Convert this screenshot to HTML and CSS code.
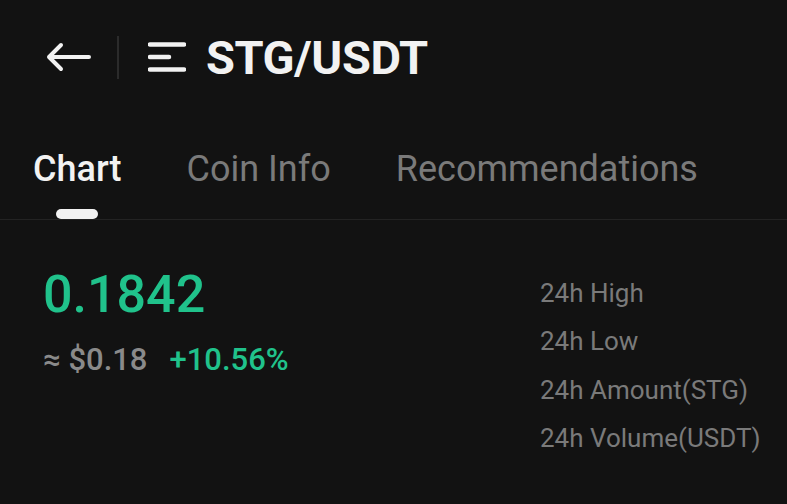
FILE: index.html
```html
<!DOCTYPE html>
<html lang="en">
<head>
  <meta charset="UTF-8" />
  <meta name="viewport" content="width=device-width, initial-scale=1.0"/>
  <title>STG/USDT</title>
  <link rel="stylesheet" href="styles.css">
</head>
<body>
  <header class="top-bar">
    <svg class="back-icon" width="45" height="30" viewBox="0 0 45 30">
      <path d="M3 15 H43 M15 3 L3 15 L15 27" fill="none" stroke="#f2f2f2" stroke-width="4" stroke-linecap="round" stroke-linejoin="round"/>
    </svg>
    <span class="bar-divider"></span>
    <svg class="menu-icon" width="38" height="32" viewBox="0 0 38 32">
      <path d="M2 3.5 H36 M2 16 H21 M2 28.5 H36" fill="none" stroke="#f2f2f2" stroke-width="4.5" stroke-linecap="round"/>
    </svg>
    <h1 class="pair">STG/USDT</h1>
  </header>

  <nav class="tabs">
    <a class="tab active" href="#">Chart<span class="tab-line"></span></a>
    <a class="tab" href="#">Coin Info<span class="tab-line"></span></a>
    <a class="tab" href="#">Recommendations<span class="tab-line"></span></a>
  </nav>

  <section class="ticker">
    <div class="price-block">
      <div class="price">0.1842</div>
      <div class="price-sub">
        <span class="fiat">&asymp; $0.18</span>
        <span class="change">+10.56%</span>
      </div>
    </div>
    <ul class="stats">
      <li>24h High</li>
      <li>24h Low</li>
      <li>24h Amount(STG)</li>
      <li>24h Volume(USDT)</li>
    </ul>
  </section>
</body>
</html>
```

FILE: styles.css
```css
* {
  box-sizing: border-box;
  margin: 0;
  padding: 0;
}

body {
  font-family: Roboto, 'Liberation Sans', sans-serif;
  background: #121212;
  color: #f2f2f2;
  width: 787px;
  height: 504px;
  overflow: hidden;
}

.top-bar {
  height: 114px;
  display: flex;
  align-items: center;
  padding-left: 46px;
}

.back-icon {
  display: block;
}

.bar-divider {
  width: 2px;
  height: 43px;
  margin-left: 26px;
  background: #2b2b2b;
}

.menu-icon {
  display: block;
  margin-left: 29px;
}

.pair {
  margin-left: 20px;
  font-size: 47px;
  font-weight: 700;
  line-height: 1;
  color: #f2f2f2;
  letter-spacing: -0.4px;
}

.tabs {
  display: flex;
  gap: 65px;
  padding: 33px 33px 0;
  border-bottom: 1px solid #232323;
}

.tab {
  display: flex;
  flex-direction: column;
  align-items: center;
  font-size: 36px;
  line-height: 44px;
  color: #7a7a7a;
  text-decoration: none;
}

.tab.active {
  color: #f2f2f2;
  font-weight: 500;
}

.tab-line {
  width: 42px;
  height: 10px;
  margin-top: 18px;
  border-radius: 5px;
}

.tab.active .tab-line {
  background: #f2f2f2;
}

.ticker {
  display: grid;
  grid-template-columns: 497px 1fr;
  align-items: start;
  padding: 45px 0 0 43px;
}

.price {
  font-size: 52px;
  font-weight: 500;
  line-height: 60px;
  color: #20c28b;
}

.price-sub {
  display: flex;
  gap: 22px;
  margin-top: 17px;
  font-size: 31px;
  line-height: 36px;
  font-weight: 500;
}

.fiat {
  color: #8a8a8a;
}

.change {
  color: #20c28b;
}

.stats {
  list-style: none;
  margin-top: 4px;
  font-size: 26px;
  line-height: 48.3px;
  color: #7a7a7a;
}
```
